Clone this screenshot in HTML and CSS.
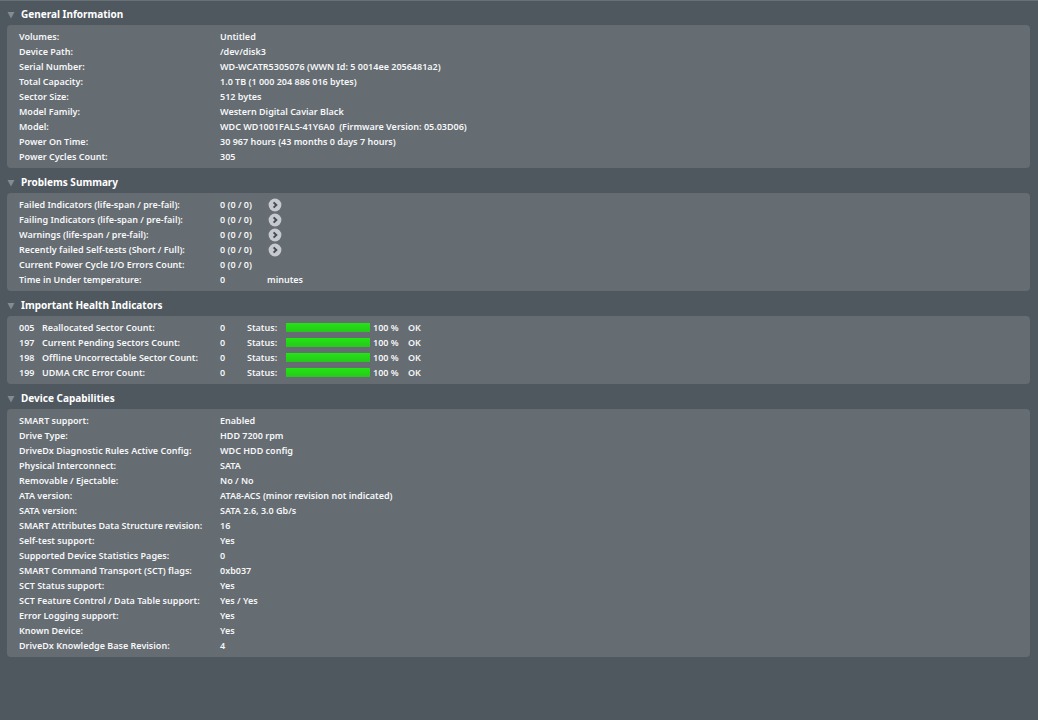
FILE: index.html
```html
<!DOCTYPE html>
<html lang="en">
<head>
<meta charset="utf-8">
<title>Drive Health</title>
<link rel="stylesheet" href="styles.css">
</head>
<body>
<svg class="sprite" aria-hidden="true">
  <symbol id="triangle" viewBox="0 0 8 8"><path d="M0.5 1h7L4 7.5z" fill="currentColor"/></symbol>
  <symbol id="arrow" viewBox="0 0 14 14"><circle cx="7" cy="7" r="6.4" fill="#c6c9d0"/><path d="M5.6 4.4L8.3 7 5.6 9.6" fill="none" stroke="#454b52" stroke-width="2"/></symbol>
</svg>
<main class="report">
  <section>
    <h2 class="heading"><button class="toggle" type="button" aria-expanded="true"><svg class="triangle"><use href="#triangle"/></svg>General Information</button></h2>
    <div class="panel">
      <table class="facts">
        <tr><th scope="row">Volumes:</th><td>Untitled</td></tr>
        <tr><th scope="row">Device Path:</th><td>/dev/disk3</td></tr>
        <tr><th scope="row">Serial Number:</th><td>WD-WCATR5305076 (WWN Id: 5 0014ee 2056481a2)</td></tr>
        <tr><th scope="row">Total Capacity:</th><td>1.0 TB (1 000 204 886 016 bytes)</td></tr>
        <tr><th scope="row">Sector Size:</th><td>512 bytes</td></tr>
        <tr><th scope="row">Model Family:</th><td>Western Digital Caviar Black</td></tr>
        <tr><th scope="row">Model:</th><td>WDC WD1001FALS-41Y6A0&nbsp; (Firmware Version: 05.03D06)</td></tr>
        <tr><th scope="row">Power On Time:</th><td>30 967 hours (43 months 0 days 7 hours)</td></tr>
        <tr><th scope="row">Power Cycles Count:</th><td>305</td></tr>
      </table>
    </div>
  </section>
  <section>
    <h2 class="heading"><button class="toggle" type="button" aria-expanded="true"><svg class="triangle"><use href="#triangle"/></svg>Problems Summary</button></h2>
    <div class="panel">
      <table class="facts">
        <tr><th scope="row">Failed Indicators (life-span / pre-fail):</th><td class="count">0 (0 / 0)</td><td><button class="go" type="button" aria-label="Show failed indicators"><svg class="arrow"><use href="#arrow"/></svg></button></td></tr>
        <tr><th scope="row">Failing Indicators (life-span / pre-fail):</th><td class="count">0 (0 / 0)</td><td><button class="go" type="button" aria-label="Show failing indicators"><svg class="arrow"><use href="#arrow"/></svg></button></td></tr>
        <tr><th scope="row">Warnings (life-span / pre-fail):</th><td class="count">0 (0 / 0)</td><td><button class="go" type="button" aria-label="Show warnings"><svg class="arrow"><use href="#arrow"/></svg></button></td></tr>
        <tr><th scope="row">Recently failed Self-tests (Short / Full):</th><td class="count">0 (0 / 0)</td><td><button class="go" type="button" aria-label="Show failed self-tests"><svg class="arrow"><use href="#arrow"/></svg></button></td></tr>
        <tr><th scope="row">Current Power Cycle I/O Errors Count:</th><td class="count">0 (0 / 0)</td><td></td></tr>
        <tr><th scope="row">Time in Under temperature:</th><td class="count">0</td><td>minutes</td></tr>
      </table>
    </div>
  </section>
  <section>
    <h2 class="heading"><button class="toggle" type="button" aria-expanded="true"><svg class="triangle"><use href="#triangle"/></svg>Important Health Indicators</button></h2>
    <div class="panel">
      <table class="facts">
        <tr><th scope="row"><span class="code">005</span>Reallocated Sector Count:</th><td class="raw">0</td><td class="status">Status:</td><td class="gauge"><progress value="100" max="100" aria-label="Reallocated Sector Count"></progress></td><td class="percent">100 %</td><td>OK</td></tr>
        <tr><th scope="row"><span class="code">197</span>Current Pending Sectors Count:</th><td class="raw">0</td><td class="status">Status:</td><td class="gauge"><progress value="100" max="100" aria-label="Current Pending Sectors Count"></progress></td><td class="percent">100 %</td><td>OK</td></tr>
        <tr><th scope="row"><span class="code">198</span>Offline Uncorrectable Sector Count:</th><td class="raw">0</td><td class="status">Status:</td><td class="gauge"><progress value="100" max="100" aria-label="Offline Uncorrectable Sector Count"></progress></td><td class="percent">100 %</td><td>OK</td></tr>
        <tr><th scope="row"><span class="code">199</span>UDMA CRC Error Count:</th><td class="raw">0</td><td class="status">Status:</td><td class="gauge"><progress value="100" max="100" aria-label="UDMA CRC Error Count"></progress></td><td class="percent">100 %</td><td>OK</td></tr>
      </table>
    </div>
  </section>
  <section>
    <h2 class="heading"><button class="toggle" type="button" aria-expanded="true"><svg class="triangle"><use href="#triangle"/></svg>Device Capabilities</button></h2>
    <div class="panel">
      <table class="facts">
        <tr><th scope="row">SMART support:</th><td>Enabled</td></tr>
        <tr><th scope="row">Drive Type:</th><td>HDD 7200 rpm</td></tr>
        <tr><th scope="row">DriveDx Diagnostic Rules Active Config:</th><td>WDC HDD config</td></tr>
        <tr><th scope="row">Physical Interconnect:</th><td>SATA</td></tr>
        <tr><th scope="row">Removable / Ejectable:</th><td>No / No</td></tr>
        <tr><th scope="row">ATA version:</th><td>ATA8-ACS (minor revision not indicated)</td></tr>
        <tr><th scope="row">SATA version:</th><td>SATA 2.6, 3.0 Gb/s</td></tr>
        <tr><th scope="row">SMART Attributes Data Structure revision:</th><td>16</td></tr>
        <tr><th scope="row">Self-test support:</th><td>Yes</td></tr>
        <tr><th scope="row">Supported Device Statistics Pages:</th><td>0</td></tr>
        <tr><th scope="row">SMART Command Transport (SCT) flags:</th><td>0xb037</td></tr>
        <tr><th scope="row">SCT Status support:</th><td>Yes</td></tr>
        <tr><th scope="row">SCT Feature Control / Data Table support:</th><td>Yes / Yes</td></tr>
        <tr><th scope="row">Error Logging support:</th><td>Yes</td></tr>
        <tr><th scope="row">Known Device:</th><td>Yes</td></tr>
        <tr><th scope="row">DriveDx Knowledge Base Revision:</th><td>4</td></tr>
      </table>
    </div>
  </section>
</main>
</body>
</html>
```
FILE: styles.css
```css
* { box-sizing: border-box; }
body {
  margin: 0;
  min-height: 100vh;
  background: #50585f;
  box-shadow: inset 0 1px #697178;
  color: #f6f7f8;
  font: 600 9px/15px "Noto Sans", "Open Sans", sans-serif;
}
.sprite { display: none; }
.report { padding: 0 8px 24px 7px; }
.heading { margin: 0; height: 25px; padding-top: 4px; display: flex; }
.toggle {
  display: flex;
  align-items: center;
  gap: 6px;
  padding: 0;
  border: 0;
  background: none;
  color: #fff;
  font: 700 10px/15px "Noto Sans", "Open Sans", sans-serif;
}
.triangle { width: 8px; height: 8px; color: #838a90; }
.panel {
  padding: 4px 12px;
  border-radius: 4px;
  background: #656c72;
}
.facts { border-collapse: collapse; }
.facts tr { height: 15px; }
.facts th, .facts td {
  padding: 0;
  height: 15px;
  text-align: left;
  font-weight: 600;
  white-space: nowrap;
  vertical-align: middle;
}
.facts th { width: 201px; min-width: 201px; }
.count { min-width: 47px; }
.raw { min-width: 27px; }
.status { min-width: 39px; }
.gauge { min-width: 87px; }
.percent { min-width: 35px; }
.code { display: inline-block; width: 23px; }
.go { display: block; margin-left: 1px; padding: 0; border: 0; background: none; line-height: 0; }
.arrow { display: block; width: 14px; height: 14px; }
progress {
  display: block;
  width: 84px;
  height: 9px;
  border: 0;
  background: #4c5359;
  appearance: none;
}
progress::-webkit-progress-bar { background: #4c5359; }
progress::-webkit-progress-value { background: linear-gradient(#21e512, #27c81b); }
```
